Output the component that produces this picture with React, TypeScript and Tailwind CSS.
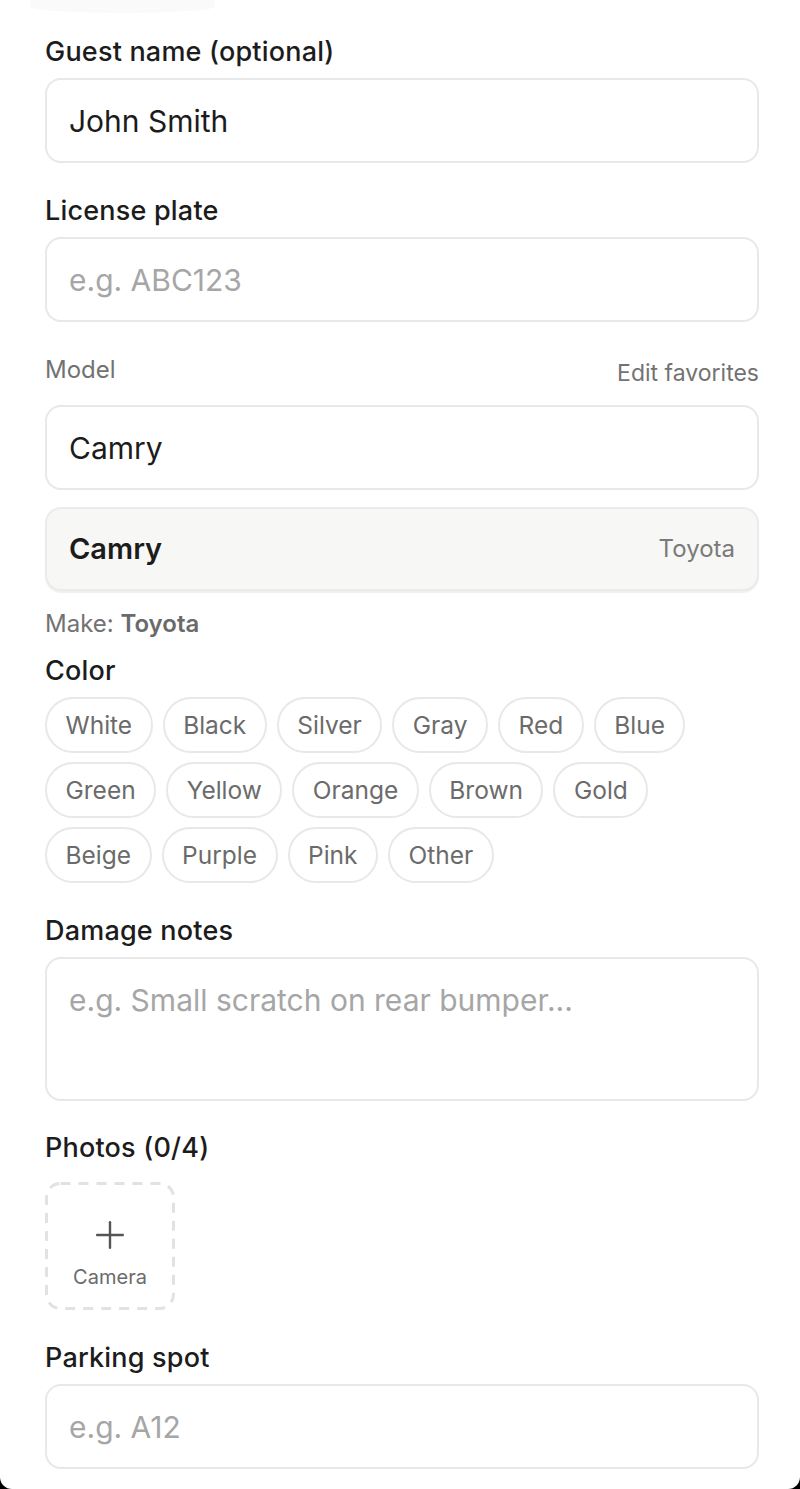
import { Plus } from 'lucide-react'

const colors = [
    ['White', 'Black', 'Silver', 'Gray', 'Red', 'Blue'],
    ['Green', 'Yellow', 'Orange', 'Brown', 'Gold'],
    ['Beige', 'Purple', 'Pink', 'Other'],
]

function Label({ children }: { children: React.ReactNode }) {
    return <div className="text-[27px] leading-[32px] font-medium tracking-[0.2px] text-[#1c1c1c] mb-[10px]">{children}</div>
}

function Field({ value, placeholder }: { value?: string; placeholder?: string }) {
    return (
        <input
            readOnly
            defaultValue={value}
            placeholder={placeholder}
            className="block w-full h-[85px] rounded-[16px] border-2 border-[#e8e8e8] bg-white px-[22px] text-[30px] text-[#1c1c1c] placeholder:text-[#a6a6a6] outline-none"
        />
    )
}

export default function App() {
    return (
        <div className="h-[1489px] bg-black font-['Inter',sans-serif]">
            <div className="h-full bg-white rounded-b-[12px] overflow-hidden pl-[45px] pr-[41px]">
                <div className="-ml-[15px] w-[185px] h-[13px] rounded-b-[50%] bg-[#fafafa]" />

                <div className="pt-[23px]">
                    <Label>Guest name (optional)</Label>
                    <Field value="John Smith" />
                </div>

                <div className="pt-[32px]">
                    <Label>License plate</Label>
                    <Field placeholder="e.g. ABC123" />
                </div>

                <div className="pt-[32px]">
                    <div className="flex justify-between items-center h-[32px] mb-[19px]">
                        <span className="text-[24px] text-[#727272]">Model</span>
                        <span className="text-[23px] text-[#727272] mt-[6px]">Edit favorites</span>
                    </div>
                    <Field value="Camry" />
                    <div className="mt-[17px] h-[84px] rounded-[16px] border-2 border-[#ebebeb] bg-[#f7f7f5] shadow-[0_2px_1px_rgba(0,0,0,0.06)] flex items-center justify-between px-[22px]">
                        <span className="text-[29px] font-semibold text-[#1c1c1c]">Camry</span>
                        <span className="text-[24px] text-[#7a7a7a]">Toyota</span>
                    </div>
                    <div className="mt-[18px] text-[24px] leading-[30px] text-[#727272]">
                        Make: <span className="font-semibold text-[#6a6a6a]">Toyota</span>
                    </div>
                </div>

                <div className="pt-[16px]">
                    <Label>Color</Label>
                    <div className="flex flex-col gap-[9px]">
                        {colors.map((row, i) => (
                            <div key={i} className="flex gap-[10px]">
                                {row.map((c) => (
                                    <span
                                        key={c}
                                        className="h-[56px] px-[18.5px] rounded-full border-2 border-[#e8e8e8] flex items-center text-[24.5px] text-[#6b6b6b]"
                                    >
                                        {c}
                                    </span>
                                ))}
                            </div>
                        ))}
                    </div>
                </div>

                <div className="pt-[32px]">
                    <Label>Damage notes</Label>
                    <textarea
                        readOnly
                        placeholder="e.g. Small scratch on rear bumper..."
                        className="block w-full h-[144px] resize-none rounded-[16px] border-2 border-[#e8e8e8] px-[22px] py-[22px] text-[30px] leading-[38px] placeholder:text-[#a6a6a6] outline-none"
                    />
                </div>

                <div className="pt-[31px]">
                    <div className="text-[27px] leading-[32px] font-medium tracking-[0.2px] text-[#1c1c1c] mb-[18px]">Photos (0/4)</div>
                    <div className="relative w-[130px] h-[128px] flex flex-col items-center pt-[31px]">
                        <svg className="absolute inset-0" width="130" height="128" viewBox="0 0 130 128" fill="none">
                            <rect x="1.5" y="1.5" width="127" height="125" rx="14" stroke="#e2e2e2" strokeWidth="3" strokeDasharray="10 8" />
                        </svg>
                        <Plus className="w-[44px] h-[44px] text-[#555]" strokeWidth={1.3} />
                        <span className="text-[20px] leading-[24px] text-[#6b6b6b] mt-[8px]">Camera</span>
                    </div>
                </div>

                <div className="pt-[32px]">
                    <Label>Parking spot</Label>
                    <Field placeholder="e.g. A12" />
                </div>
            </div>
        </div>
    )
}
